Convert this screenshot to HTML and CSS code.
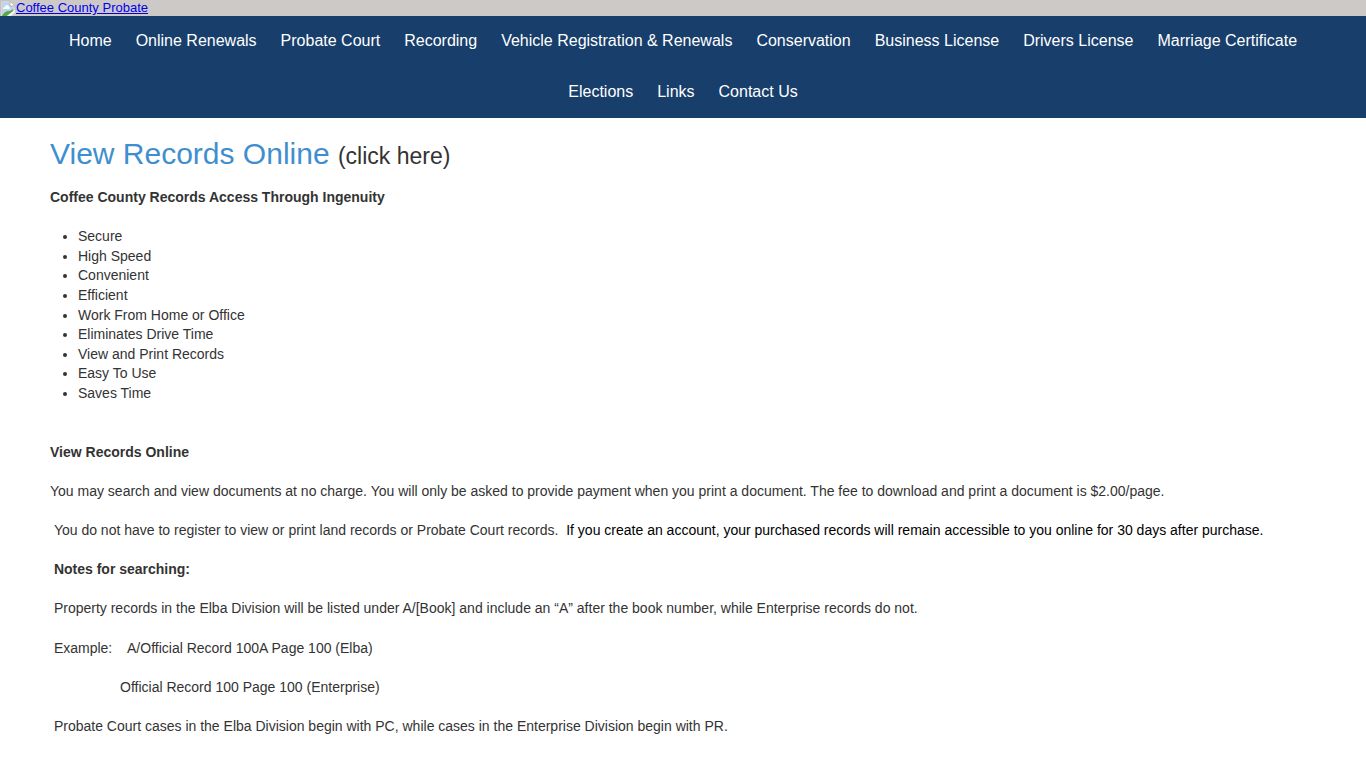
FILE: index.html
```html
<!DOCTYPE html>
<html lang="en">
<head>
  <meta charset="UTF-8">
  <title>View Records Online - Coffee County Probate</title>
  <meta name="viewport" content="width=device-width, initial-scale=1.0">
  <link rel="stylesheet" href="styles.css">
</head>
<body>
  <header class="site-header">
    <a href="#" class="logo">
      <svg class="logo-icon" width="16" height="16" viewBox="0 0 16 16" aria-hidden="true">
        <path d="M1 1h9l5 5v10H1z" fill="#f4f6f4"/>
        <path d="M2 2h8v4h4v5L4 16H2z" fill="#bdd3ee"/>
        <path d="M3 9a2 2 0 0 1 2-2 2 2 0 0 1 4 0 2 2 0 0 1 1 2z" fill="#fff"/>
        <path d="M2 16c1-3 4-5 7-5 1 0 3-1 4-2v2l-6 5z" fill="#58a846"/>
        <path d="M10 1v5h5z" fill="#fff" stroke="#b8b8b8"/>
        <path d="M1 16V1h9M15 6v4" fill="none" stroke="#b8b8b8"/>
        <path d="M7 16l8-6v2l-5 4z" fill="#f4f6f4"/>
        <path d="M11 16l4-4v4z" fill="#cdc9c7"/>
      </svg>
      <span>Coffee County Probate</span>
    </a>
  </header>

  <nav class="main-nav">
    <a href="#">Home</a>
    <a href="#">Online Renewals</a>
    <a href="#">Probate Court</a>
    <a href="#">Recording</a>
    <a href="#">Vehicle Registration &amp; Renewals</a>
    <a href="#">Conservation</a>
    <a href="#">Business License</a>
    <a href="#">Drivers License</a>
    <a href="#">Marriage Certificate</a>
    <a href="#">Elections</a>
    <a href="#">Links</a>
    <a href="#">Contact Us</a>
  </nav>

  <main class="content">
    <h1><a href="#">View Records Online</a> <small>(click here)</small></h1>
    <p><strong>Coffee County Records Access Through Ingenuity</strong></p>
    <ul class="features">
      <li>Secure</li>
      <li>High Speed</li>
      <li>Convenient</li>
      <li>Efficient</li>
      <li>Work From Home or Office</li>
      <li>Eliminates Drive Time</li>
      <li>View and Print Records</li>
      <li>Easy To Use</li>
      <li>Saves Time</li>
    </ul>

    <p><strong>View Records Online</strong></p>
    <p>You may search and view documents at no charge. You will only be asked to provide payment when you print a document. The fee to download and print a document is $2.00/page.</p>
    <p>&nbsp;You do not have to register to view or print land records or Probate Court records.&nbsp; <span class="notice">If you create an account, your purchased records will remain accessible to you online for 30 days after purchase.</span></p>
    <p><strong>&nbsp;Notes for searching:</strong></p>
    <p>&nbsp;Property records in the Elba Division will be listed under A/[Book] and include an “A” after the book number, while Enterprise records do not.</p>
    <p>&nbsp;Example:&nbsp;&nbsp;&nbsp; A/Official Record 100A Page 100 (Elba)</p>
    <p>&nbsp;&nbsp;&nbsp;&nbsp;&nbsp;&nbsp;&nbsp;&nbsp;&nbsp;&nbsp;&nbsp;&nbsp;&nbsp;&nbsp;&nbsp;&nbsp;&nbsp; Official Record 100 Page 100 (Enterprise)</p>
    <p>&nbsp;Probate Court cases in the Elba Division begin with PC, while cases in the Enterprise Division begin with PR.</p>
  </main>
</body>
</html>
```
FILE: styles.css
```css
body {
  margin: 0;
  background: #fff;
  color: #333;
  font-family: Arial, "Liberation Sans", sans-serif;
  font-size: 14px;
  line-height: 1.4;
}

/* Header */
.site-header {
  display: flex;
  background: #cdc9c7;
}
.logo {
  display: flex;
  color: #0000ee;
  font-size: 13px;
  line-height: 16px;
}

/* Navigation */
.main-nav {
  display: flex;
  flex-wrap: wrap;
  justify-content: center;
  padding: 0 24px;
  background: #183e6b;
}
.main-nav a {
  padding: 0 12px 2px;
  color: #fff;
  font-size: 16px;
  line-height: 49px;
  text-decoration: none;
}
.main-nav a:hover {
  text-decoration: underline;
}

/* Page content */
.content {
  padding: 16px 50px;
}
.content h1 {
  margin: 0 0 12px;
  font-size: 30px;
  font-weight: normal;
  line-height: 40px;
}
.content h1 a {
  color: #3f8fce;
  text-decoration: none;
}
.content h1 small {
  font-size: 23px;
}
.content p {
  margin: 0 0 1.4em;
}
.features {
  margin: 0 0 2.8em;
  padding-left: 28px;
}
.notice {
  color: #000;
}
```
